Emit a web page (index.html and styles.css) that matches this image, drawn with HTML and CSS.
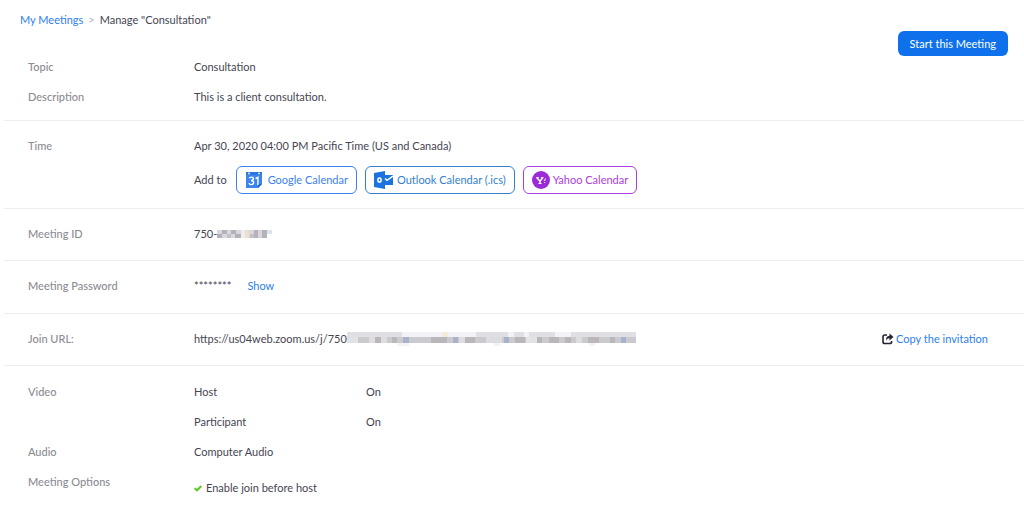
FILE: index.html
```html
<!DOCTYPE html>
<html lang="en">
<head>
<meta charset="utf-8">
<title>Manage "Consultation"</title>
<link rel="stylesheet" href="styles.css">
</head>
<body>
<header class="top">
  <nav class="crumbs" aria-label="Breadcrumb"><a href="#">My Meetings</a><span class="sep">&gt;</span><span>Manage "Consultation"</span></nav>
  <button class="start" type="button">Start this Meeting</button>
</header>
<main class="details">
  <section class="group first">
    <div class="row"><div class="label">Topic</div><div>Consultation</div></div>
    <div class="row"><div class="label">Description</div><div>This is a client consultation.</div></div>
  </section>
  <section class="group time">
    <div class="row"><div class="label">Time</div>
      <div class="when">
        <div>Apr 30, 2020 04:00 PM Pacific Time (US and Canada)</div>
        <div class="calendars"><span class="add">Add to</span>
          <button class="cal google" type="button"><svg width="18" height="18" viewBox="0 0 18 18" aria-hidden="true"><path fill="#3a85ee" d="M1 1h16v12l-4 4H1z"/><path fill="#1c62c8" d="M17 13h-4v4z"/><path fill="#2d74dc" d="M1 1h16v3H1z"/><circle cx="4" cy="2.5" r="1" fill="#dce9fc"/><circle cx="14" cy="2.5" r="1" fill="#dce9fc"/><path fill="none" stroke="#fff" stroke-width="1.4" d="M4.300 7.300c.4-1 1.300-1.200 2-1.200 1.400 0 2.100.7 2.100 1.700S7.600 9.600 6 9.600c1.700 0 2.600.7 2.600 2s-1 2-2.400 2c-1.200 0-2-.6-2.300-1.500M10.600 7.700l2.300-1.400v7.600"/></svg>Google Calendar</button>
          <button class="cal outlook" type="button"><svg width="19" height="18" viewBox="0 0 19 18" aria-hidden="true"><path fill="#1b73dd" d="M10 4h9v10h-9zM0 2l11-2v18L0 16z"/><path fill="none" stroke="#fff" stroke-width="1.500" d="M11 7.500l2 1.800L19 5"/><ellipse cx="5.500" cy="9" rx="1.600" ry="2.100" fill="none" stroke="#fff" stroke-width="1.500"/></svg>Outlook Calendar (.ics)</button>
          <button class="cal yahoo" type="button"><svg width="18" height="18" viewBox="0 0 18 18" aria-hidden="true"><circle cx="9" cy="9" r="9" fill="#9b2bd6"/><path fill="none" stroke="#fff" stroke-width="1.500" d="M5 7l3 3.200L10.500 7M8 10v2.500"/><path fill="none" stroke="#fff" d="M4 6.700h3M9 6.700h2.600M6.500 12.500h3M13.300 7.500l-.6 2.500M12.200 11.500h1"/></svg>Yahoo Calendar</button>
        </div>
      </div>
    </div>
  </section>
  <section class="group">
    <div class="row"><div class="label">Meeting ID</div><div class="masked">750-<svg width="56" height="16" viewBox="0 0 56 16" shape-rendering="crispEdges" role="img" aria-label="Hidden digits"><path fill="#d7d7dc" d="M0 4h24v8H0zM29 4h21v8H29z"/><path fill="#b4b2b8" d="M5 4h5v4H5zM14 4h5v4h-5zM37 4h4v8h-4zM45 4h5v8h-5zM0 8h5v4H0zM18 8h6v4h-6z"/><path fill="#c3c0c7" d="M10 8h4v4h-4zM33 8h4v4h-4z"/><path fill="#eeeef1" d="M24 4h4v8h-4z"/><path fill="#eddfd0" d="M28 4h4v8h-4z"/><path fill="#d9e4f0" d="M50 4h5v4h-5z"/></svg></div></div>
  </section>
  <section class="group code">
    <div class="row"><div class="label">Meeting Password</div><div class="password"><span>********</span><a href="#">Show</a></div></div>
  </section>
  <section class="group">
    <div class="row"><div class="label">Join URL:</div>
      <div class="join"><span class="masked">https://us04web.zoom.us/j/750<svg width="289" height="16" viewBox="0 0 289 16" shape-rendering="crispEdges" role="img" aria-label="Hidden link"><path fill="#e0e0e4" d="M0 1h55v5H0zM129 1h32v5h-32zM167 1h10v5h-10zM182 1h26v5h-26zM224 1h65v5h-65z"/><path fill="#f3f3f7" d="M55 1h74v5H55zM161 1h6v5h-6zM177 1h5v5h-5zM208 1h16v5h-16zM147 12h6v3h-6zM242 12h6v3h-6zM50 12h12v3H50z"/><path fill="#e2e2e5" d="M0 6h11v6H0zM179 6h11v6h-11z"/><path fill="#cacacf" d="M11 6h168v6H11zM190 6h99v6H190z"/><path fill="#bbb6b9" d="M28 6h6v6h-6zM45 6h5v6h-5zM84 6h16v6H84zM118 6h10v6h-10zM168 6h10v6h-10zM190 6h5v6h-5zM202 6h10v6h-10zM218 6h6v6h-6zM241 6h11v6h-11zM263 6h5v6h-5z"/><path fill="#dddde1" d="M22 6h6v6h-6zM34 6h6v6h-6zM112 6h6v6h-6zM139 6h16v6h-16zM229 6h6v6h-6z"/><path fill="#a9b2cb" d="M56 6h6v6h-6zM106 6h5v6h-5zM157 6h5v6h-5zM274 6h5v6h-5z"/><path fill="#f3ecdd" d="M95 1h6v5h-6z"/></svg></span>
        <a class="copy" href="#"><svg width="12" height="12" viewBox="0 0 12 12" aria-hidden="true"><path fill="none" stroke="#232333" stroke-width="1.600" d="M5 2H2.800Q1 2 1 3.800v4.900q0 1.800 1.800 1.800h5q1.800 0 1.800-1.800V8"/><path fill="#232333" d="M7.500.5L11.500 4l-4 3.500V5.300C5.800 5.200 5 6 4.700 7.800 3.600 5 4.800 2.800 7.500 2.700z"/></svg>Copy the invitation</a></div></div>
  </section>
  <section class="group last">
    <div class="row"><div class="label">Video</div><div class="pairs"><span>Host</span><span>On</span><span>Participant</span><span>On</span></div></div>
    <div class="row"><div class="label">Audio</div><div>Computer Audio</div></div>
    <div class="row"><div class="label">Meeting Options</div><div class="option"><svg width="8" height="8" viewBox="0 0 8 8" aria-hidden="true"><path fill="none" stroke="#5bc71e" stroke-width="2" d="M.7 4.200L3 6.300 7.300 2"/></svg>Enable join before host</div></div>
  </section>
</main>
</body>
</html>
```
FILE: styles.css
```css
* { box-sizing: border-box; }
body {
  margin: 0;
  background: #fff;
  color: #454552;
  font: 11px/16px Lato, "Liberation Sans", sans-serif;
}
a { color: #2d80ec; text-decoration: none; }
svg { flex: none; }
button { font: inherit; cursor: pointer; }
.top {
  display: flex;
  justify-content: space-between;
  align-items: flex-start;
  padding: 12px 16px 0 20px;
}
.crumbs { display: flex; gap: 5px; }
.sep { color: #b5b5bd; }
.start {
  margin-top: 19px;
  height: 25px;
  padding: 0 12px;
  border: 0;
  border-radius: 6px;
  background: #0e71eb;
  color: #fff;
}
.details { padding-left: 4px; }
.group {
  display: flex;
  flex-direction: column;
  gap: 14px;
  padding: 17px 16px 18px 24px;
  border-bottom: 1px solid #ededf0;
}
.first { padding-top: 3px; padding-bottom: 15px; }
.time { padding-bottom: 14px; }
.code { padding-bottom: 19px; }
.last { padding-top: 18px; border-bottom: 0; }
.row { display: grid; grid-template-columns: 166px 1fr; }
.label { color: #8c8c92; font-weight: 500; }
.when { display: grid; gap: 12px; }
.calendars { display: flex; align-items: center; gap: 8px; }
.add { margin-right: 1px; }
.cal {
  display: flex;
  align-items: center;
  height: 28px;
  padding: 0 8px;
  border: 1px solid currentColor;
  border-radius: 6px;
  background: #fff;
}
.google { gap: 5px; color: #3b82eb; }
.outlook { gap: 4px; color: #347fce; }
.yahoo { gap: 3px; color: #ac40db; }
.masked { display: flex; }
.password { display: flex; gap: 16px; }
.join { display: flex; justify-content: space-between; }
.copy { display: flex; align-items: center; gap: 2px; margin-right: 20px; }
.pairs { display: grid; grid-template-columns: 172px 1fr; row-gap: 14px; }
.option { display: flex; align-items: center; gap: 4px; padding-top: 6px; }
```
